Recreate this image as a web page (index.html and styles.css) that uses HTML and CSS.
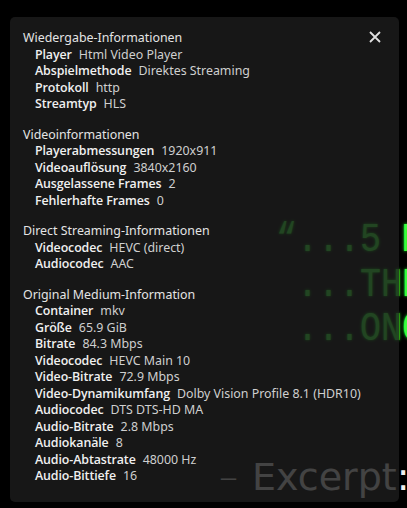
FILE: index.html
```
<!DOCTYPE html>
<html lang="de">
<head>
<meta charset="utf-8">
<title>Wiedergabe-Informationen</title>
<link rel="stylesheet" href="styles.css">
</head>
<body>
<div class="video">
  <div class="caption caption-1">“...5 M</div>
  <div class="caption caption-2">...THE</div>
  <div class="caption caption-3">...ONC</div>
  <div class="credit"><span class="dash">–</span>Excerpt:</div>
</div>

<div class="stats">
  <button class="close" aria-label="Schließen">
    <svg viewBox="0 0 12 12" width="12" height="12"><path d="M1 1 L11 11 M11 1 L1 11" stroke="currentColor" stroke-width="1.8" fill="none"/></svg>
  </button>

  <section class="section">
    <div class="title">Wiedergabe-Informationen</div>
    <div class="row"><span class="label">Player</span><span class="value">Html Video Player</span></div>
    <div class="row"><span class="label">Abspielmethode</span><span class="value">Direktes Streaming</span></div>
    <div class="row"><span class="label">Protokoll</span><span class="value">http</span></div>
    <div class="row"><span class="label">Streamtyp</span><span class="value">HLS</span></div>
  </section>

  <section class="section">
    <div class="title">Videoinformationen</div>
    <div class="row"><span class="label">Playerabmessungen</span><span class="value">1920x911</span></div>
    <div class="row"><span class="label">Videoauflösung</span><span class="value">3840x2160</span></div>
    <div class="row"><span class="label">Ausgelassene Frames</span><span class="value">2</span></div>
    <div class="row"><span class="label">Fehlerhafte Frames</span><span class="value">0</span></div>
  </section>

  <section class="section">
    <div class="title">Direct Streaming-Informationen</div>
    <div class="row"><span class="label">Videocodec</span><span class="value">HEVC (direct)</span></div>
    <div class="row"><span class="label">Audiocodec</span><span class="value">AAC</span></div>
  </section>

  <section class="section">
    <div class="title">Original Medium-Information</div>
    <div class="row"><span class="label">Container</span><span class="value">mkv</span></div>
    <div class="row"><span class="label">Größe</span><span class="value">65.9 GiB</span></div>
    <div class="row"><span class="label">Bitrate</span><span class="value">84.3 Mbps</span></div>
    <div class="row"><span class="label">Videocodec</span><span class="value">HEVC Main 10</span></div>
    <div class="row"><span class="label">Video-Bitrate</span><span class="value">72.9 Mbps</span></div>
    <div class="row"><span class="label">Video-Dynamikumfang</span><span class="value">Dolby Vision Profile 8.1 (HDR10)</span></div>
    <div class="row"><span class="label">Audiocodec</span><span class="value">DTS DTS-HD MA</span></div>
    <div class="row"><span class="label">Audio-Bitrate</span><span class="value">2.8 Mbps</span></div>
    <div class="row"><span class="label">Audiokanäle</span><span class="value">8</span></div>
    <div class="row"><span class="label">Audio-Abtastrate</span><span class="value">48000 Hz</span></div>
    <div class="row"><span class="label">Audio-Bittiefe</span><span class="value">16</span></div>
  </section>
</div>
</body>
</html>
```
FILE: styles.css
```
html, body {
  margin: 0;
  padding: 0;
}
body {
  width: 407px;
  height: 508px;
  overflow: hidden;
  background: #0a0a0a;
  position: relative;
  font-family: "Noto Sans", "Open Sans", sans-serif;
}

/* video frame behind the overlay */
.video {
  position: absolute;
  inset: 0;
  background: #000;
}
.caption {
  position: absolute;
  left: 276px;
  font-family: "Liberation Mono", monospace;
  font-weight: normal;
  font-size: 35px;
  line-height: 1;
  color: #3cff3c;
  text-shadow: 0 0 3px #1aff1a;
  white-space: nowrap;
  transform: scaleY(1.15);
  transform-origin: left top;
}
.caption-1 { top: 221px; }
.caption-2 { top: 266px; left: 297px; }
.caption-3 { top: 310px; left: 297px; }
.credit {
  position: absolute;
  left: 219px;
  top: 458px;
  font-family: "DejaVu Sans", sans-serif;
  font-weight: normal;
  font-size: 38px;
  line-height: 1;
  color: #f0f0f0;
  white-space: nowrap;
  display: flex;
  gap: 14px;
}
.dash {
  font-weight: 200;
}

/* stats overlay */
.stats {
  position: absolute;
  left: 10px;
  top: 17px;
  width: 389px;
  box-sizing: border-box;
  padding: 13px 13px 3px 13px;
  background: rgba(28, 28, 28, 0.82);
  border-radius: 5px;
  color: #d8d8d8;
  font-size: 12.4px;
  line-height: 16.5px;
}
.close {
  position: absolute;
  top: 13px;
  right: 17px;
  width: 14px;
  height: 14px;
  padding: 1px;
  margin: 0;
  border: 0;
  background: none;
  color: #e0e0e0;
  display: flex;
  align-items: center;
  justify-content: center;
}
.section {
  margin-bottom: 14px;
}
.title {
  color: #e4e4e4;
  font-weight: 400;
}
.row {
  padding-left: 12px;
  display: flex;
  gap: 7px;
  white-space: nowrap;
}
.label {
  font-family: "Open Sans", "Noto Sans", sans-serif;
  color: #f0f0f0;
  font-weight: 600;
  letter-spacing: -0.1px;
}
.value {
  color: #cfcfcf;
}
```
